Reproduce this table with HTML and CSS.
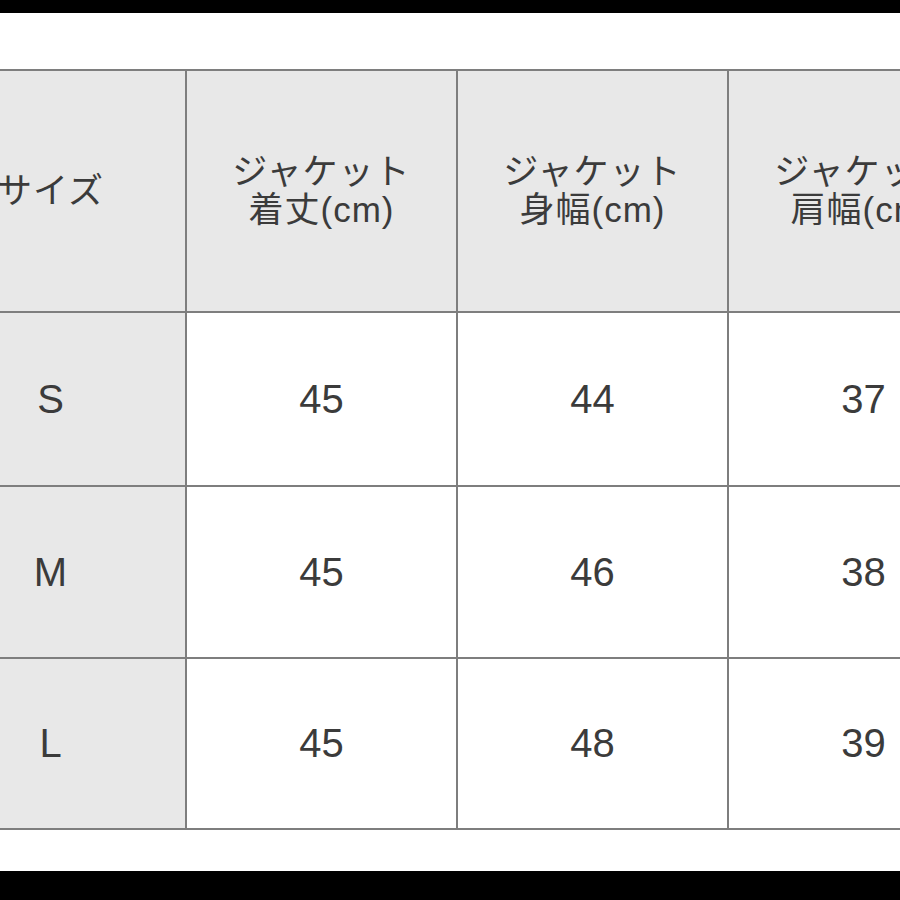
FILE: index.html
```html
<!DOCTYPE html>
<html lang="ja">
<head>
<meta charset="utf-8">
<title>サイズ表</title>
<link rel="stylesheet" href="styles.css">
</head>
<body>
<div class="frame">
  <div class="bar bar-top"></div>
  <div class="content">
    <div class="size-table">
      <div class="cell head">サイズ</div>
      <div class="cell head">ジャケット<br>着丈(cm)</div>
      <div class="cell head">ジャケット<br>身幅(cm)</div>
      <div class="cell head">ジャケット<br>肩幅(cm)</div>

      <div class="cell label">S</div>
      <div class="cell num">45</div>
      <div class="cell num">44</div>
      <div class="cell num">37</div>

      <div class="cell label">M</div>
      <div class="cell num">45</div>
      <div class="cell num">46</div>
      <div class="cell num">38</div>

      <div class="cell label">L</div>
      <div class="cell num">45</div>
      <div class="cell num">48</div>
      <div class="cell num">39</div>
    </div>
  </div>
  <div class="bar bar-bottom"></div>
</div>
</body>
</html>
```

FILE: styles.css
```css
html, body {
  margin: 0;
  padding: 0;
  background: #ffffff;
  overflow: hidden;
}

.frame {
  width: 900px;
  height: 900px;
  display: flex;
  flex-direction: column;
  overflow: hidden;
}

.bar {
  background: #000000;
  flex: none;
}

.bar-top {
  height: 13px;
}

.bar-bottom {
  height: 29px;
}

.content {
  flex: 1;
  padding-top: 56px;
  overflow: hidden;
}

.size-table {
  margin-left: -86px;
  width: 1086px;
  box-sizing: border-box;
  display: grid;
  grid-template-columns: repeat(4, 269px);
  grid-template-rows: 240px 172px 170px 169px;
  gap: 2px;
  padding: 2px;
  background: #7e7e7e;
  font-family: "Liberation Sans", "Noto Sans CJK JP", sans-serif;
  color: #3b3b3b;
}

.cell {
  display: flex;
  align-items: center;
  justify-content: center;
  text-align: center;
  background: #ffffff;
}

.head {
  background: #e8e8e8;
  font-size: 35px;
  line-height: 38px;
  letter-spacing: 1px;
}

.label {
  background: #e8e8e8;
  font-size: 40px;
}

.num {
  font-size: 40px;
}
```
